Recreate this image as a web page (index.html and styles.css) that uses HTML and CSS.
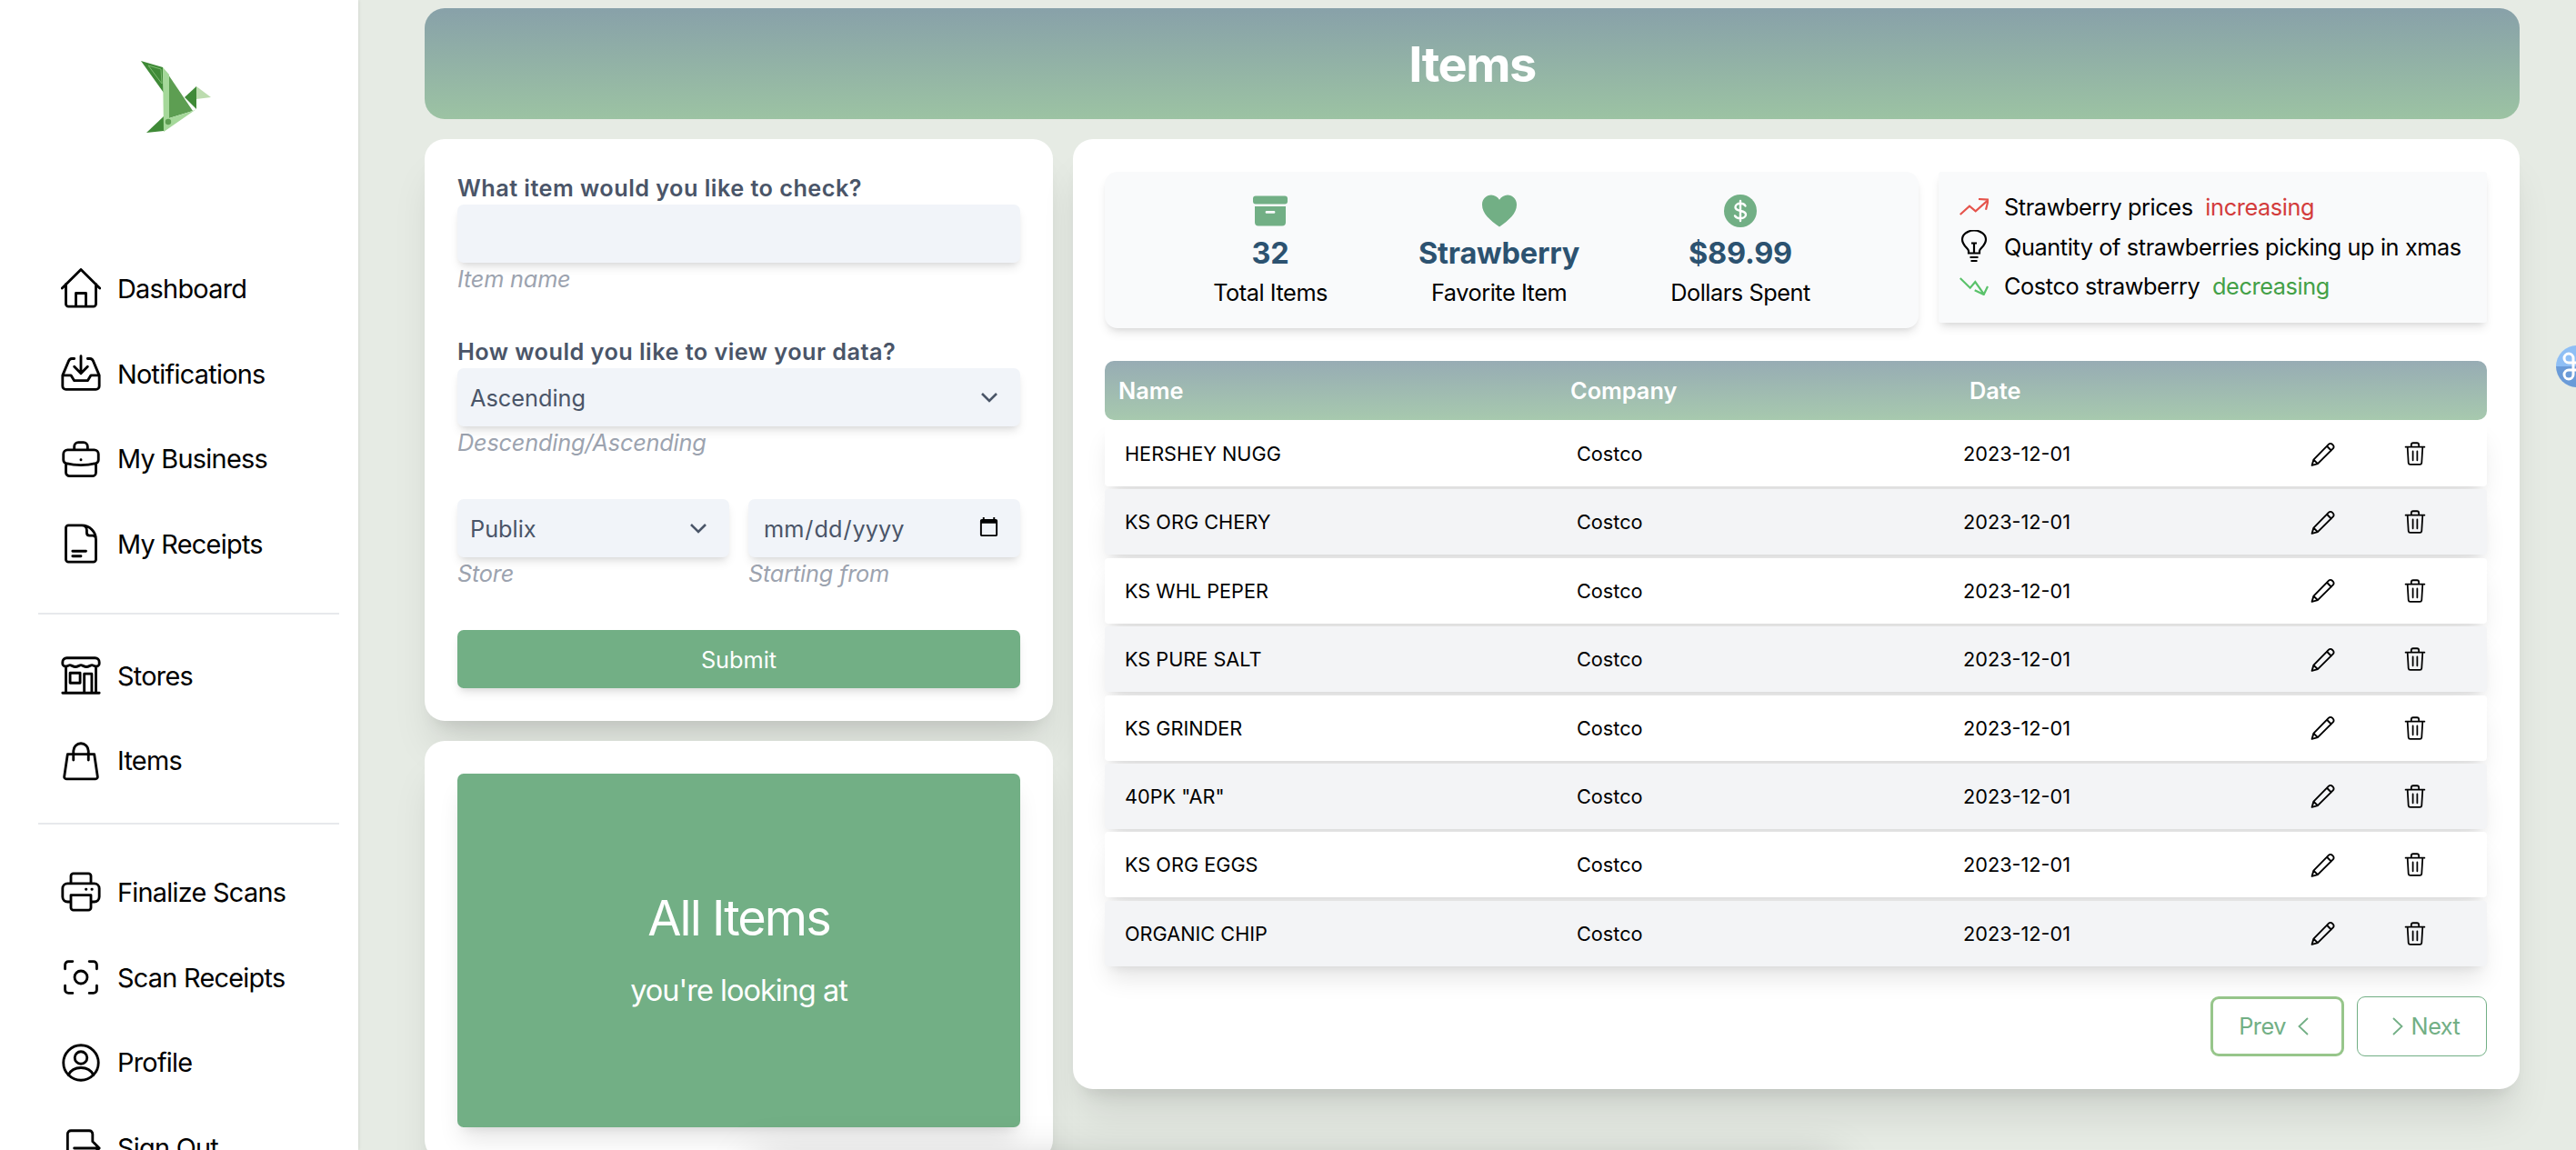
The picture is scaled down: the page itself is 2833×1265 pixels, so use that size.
FILE: index.html
```html
<!DOCTYPE html>
<html lang="en">
<head>
  <meta charset="UTF-8" />
  <meta name="viewport" content="width=device-width, initial-scale=1.0" />
  <title>Items</title>
  <link rel="stylesheet" href="styles.css">
</head>
<body>
  <svg class="sprite" aria-hidden="true">
    <symbol id="i-edit" viewBox="0 0 24 24"><path d="M1 23l1.600-5.600L17.400 2.400a2.400 2.400 0 0 1 3.400 0l.8.8a2.400 2.400 0 0 1 0 3.400L6.600 21.400 1 23zM15.600 4.200l4.200 4.200M2.600 17.400l4 4"/></symbol>
    <symbol id="i-trash" viewBox="0 0 22 25"><path d="M1 5.500h20M7 5V3.200A2 2 0 0 1 9 1.200h4a2 2 0 0 1 2 2V5M3 5.500l1 16.700a1.900 1.900 0 0 0 1.900 1.700h10.200a1.900 1.900 0 0 0 1.900-1.700l1-16.700M8.700 10v9.500M13.300 10v9.500"/></symbol>
    <symbol id="i-chevron" viewBox="0 0 20 12"><path d="M2 2l8 8 8-8"/></symbol>
  </svg>

  <aside class="sidebar">
    <div class="logo">
      <svg width="77" height="80" viewBox="0 0 77 80">
        <polygon points="0,0 24,7 25,35" fill="#3f8a37"/>
        <polygon points="8,5 22,9 23,25" fill="none" stroke="#7dbb70" stroke-width="1"/>
        <polygon points="30,15 57,55 31,63" fill="#5d9e52"/>
        <polygon points="48,40 61,28 61,53" fill="#3f8a37"/>
        <polygon points="61,28 77,40 61,42" fill="#bcdcaf"/>
        <polygon points="6,79 25,61 25,77" fill="#3f8a37"/>
        <polygon points="24,7 31,15 31,63 57,55 61,53 25,78" fill="#a5d89a"/>
        <circle cx="30" cy="67" r="3.200" fill="#5d9e52"/>
      </svg>
    </div>
    <nav class="nav">
      <a class="nav-item"><svg viewBox="0 0 24 24"><path d="M.7 12L12 .8 23.300 12M3 9.500v12A1.500 1.500 0 0 0 4.500 23h15a1.500 1.500 0 0 0 1.500-1.500v-12M9 23v-8h6v8"/></svg>Dashboard</a>
      <a class="nav-item"><svg viewBox="0 0 24 24"><path d="M8 3H6.500a2 2 0 0 0-1.800 1.300L1 13v6.500a2 2 0 0 0 2 2h18a2 2 0 0 0 2-2V13l-3.700-8.700A2 2 0 0 0 17.500 3H16M1 13h5l2 3.200h8l2-3.200h5M12 1.500v10M8 7.800l4 4 4-4"/></svg>Notifications</a>
      <a class="nav-item"><svg viewBox="0 0 24 24"><path d="M8 6.500v-2a2.500 2.500 0 0 1 2.500-2.500h3A2.500 2.500 0 0 1 16 4.500v2M1.500 9a2.500 2.500 0 0 1 2.500-2.500h16A2.500 2.500 0 0 1 22.500 9v3.500c0 1-.6 1.700-1.500 2-6 1.500-12 1.500-18 0-.9-.3-1.500-1-1.500-2zM3 14.500V20a2.200 2.200 0 0 0 2.200 2.200h13.600A2.200 2.200 0 0 0 21 20v-5.500M12 12.300v.2"/></svg>My Business</a>
      <a class="nav-item"><svg viewBox="0 0 24 24"><path d="M12.500 1H4.500A1.500 1.500 0 0 0 3 2.500v19A1.500 1.500 0 0 0 4.500 23h15a1.500 1.500 0 0 0 1.500-1.500V9.500A8.500 8.500 0 0 0 12.500 1zM12.500 1c2 0 3 1.200 3 3v1.500c0 1 .7 1.700 1.700 1.700H19c1.200 0 2 1 2 2.300M7 16.500h8M7 19.500h5"/></svg>My Receipts</a>
      <hr class="rule rule-first" />
      <a class="nav-item"><svg viewBox="0 0 24 24"><path d="M3.500 1.500h17A2.500 2.500 0 0 1 23 4v1a1.500 1.500 0 0 1-.8 1.300c-1.500.8-2.700-.5-3.600-.5s-1.800 1-3.300 1-2.400-1-3.300-1-1.800 1-3.300 1-2.400-1-3.300-1-2.100 1.300-3.600.5A1.500 1.500 0 0 1 1 5V4a2.500 2.500 0 0 1 2.500-2.500zM3 7v15.500M21 7v15.500M1 22.500h22M5.500 10.500h6v6h-6zM14 22.500V11h4.500v11.500"/></svg>Stores</a>
      <a class="nav-item"><svg viewBox="0 0 24 24"><path d="M4 8h16l2 13.500a1.200 1.200 0 0 1-1.200 1.300H3.200A1.200 1.200 0 0 1 2 21.500zM7.500 11.500V6a4.500 4.500 0 0 1 9 0v5.500"/></svg>Items</a>
      <hr class="rule rule-second" />
      <a class="nav-item"><svg viewBox="0 0 24 24"><path d="M6 7V2.500A1.500 1.500 0 0 1 7.500 1h9A1.500 1.500 0 0 1 18 2.500V7M5.500 18H4a3 3 0 0 1-3-3V10a3 3 0 0 1 3-3h16a3 3 0 0 1 3 3v5a3 3 0 0 1-3 3h-1.500M6 14h12v7.500a1.500 1.500 0 0 1-1.500 1.500h-9A1.500 1.500 0 0 1 6 21.500zM15 10.500h.2M18.500 10.500h.2"/></svg>Finalize Scans</a>
      <a class="nav-item"><svg viewBox="0 0 24 24"><path d="M2.500 7V4.500a2 2 0 0 1 2-2H7M17 2.500h2.500a2 2 0 0 1 2 2V7M21.500 17v2.500a2 2 0 0 1-2 2H17M7 21.500H4.500a2 2 0 0 1-2-2V17"/><circle cx="12" cy="12" r="3.800"/></svg>Scan Receipts</a>
      <a class="nav-item"><svg viewBox="0 0 24 24"><circle cx="12" cy="12" r="10.500"/><circle cx="12" cy="9" r="3.700"/><path d="M4.500 19.300c1.500-3 4.500-4.300 7.500-4.300s6 1.300 7.500 4.300"/></svg>Profile</a>
      <a class="nav-item"><svg viewBox="0 0 24 24"><path d="M19 8V3.500a2 2 0 0 0-2-2H6a2 2 0 0 0-2 2v17a2 2 0 0 0 2 2h11a2 2 0 0 0 2-2V16M8 12h15M19.500 8.500L23 12l-3.500 3.500"/></svg>Sign Out</a>
    </nav>
  </aside>

  <main class="main">
    <header class="banner"><h1>Items</h1></header>

    <div class="columns">
      <section class="left-col">
        <form class="card search-form">
          <div class="field">
            <label for="item">What item would you like to check?</label>
            <input id="item" class="control" type="text" />
            <p class="hint">Item name</p>
          </div>
          <div class="field">
            <label for="order">How would you like to view your data?</label>
            <div class="select-wrap">
              <select id="order" class="control"><option>Ascending</option><option>Descending</option></select>
              <svg class="chevron"><use href="#i-chevron"/></svg>
            </div>
            <p class="hint">Descending/Ascending</p>
          </div>
          <div class="field-row">
            <div class="field">
              <div class="select-wrap">
                <select class="control"><option>Publix</option><option>Costco</option></select>
                <svg class="chevron"><use href="#i-chevron"/></svg>
              </div>
              <p class="hint">Store</p>
            </div>
            <div class="field">
              <input class="control date" type="date" />
              <p class="hint">Starting from</p>
            </div>
          </div>
          <button class="submit" type="button">Submit</button>
        </form>

        <div class="card">
          <div class="all-items">
            <h2>All Items</h2>
            <p>you're looking at</p>
          </div>
        </div>
      </section>

      <section class="card results">
        <div class="summary">
          <div class="stats">
            <div class="stat">
              <svg class="stat-icon" viewBox="0 0 38 33"><path d="M3 0h32a3 3 0 0 1 3 3v3a3 3 0 0 1-3 3H3a3 3 0 0 1-3-3V3a3 3 0 0 1 3-3zM2 11.500h34V29a4 4 0 0 1-4 4H6a4 4 0 0 1-4-4zM15 16.500a1.200 1.200 0 0 0 0 2.800h8a1.200 1.200 0 0 0 0-2.800z" fill-rule="evenodd"/></svg>
              <strong>32</strong>
              <span>Total Items</span>
            </div>
            <div class="stat">
              <svg class="stat-icon" viewBox="0 0 36 33"><path d="M18 33C8 26 0 19 0 10 0 4 4.500 0 9.500 0 13 0 16 2 18 5c2-3 5-5 8.500-5C31.500 0 36 4 36 10c0 9-8 16-18 23z"/></svg>
              <strong>Strawberry</strong>
              <span>Favorite Item</span>
            </div>
            <div class="stat">
              <svg class="stat-icon" viewBox="0 0 36 36"><circle cx="18" cy="18" r="18"/><path class="dollar" d="M18 7v22M23.500 12.500c-1-1.700-3-2.700-5.500-2.700-3 0-5.500 1.600-5.500 4.200 0 5.500 11.500 2.500 11.500 8 0 2.600-2.700 4.200-6 4.200-2.700 0-5-1-6-2.800"/></svg>
              <strong>$89.99</strong>
              <span>Dollars Spent</span>
            </div>
          </div>
          <ul class="trends">
            <li><svg class="trend-icon up" viewBox="0 0 32 20"><path d="M.7 18L11 8.700l6.700 5.600L31.700 1.700M21 1l10.700.7L29 12.700"/></svg>Strawberry prices <em class="rising">increasing</em></li>
            <li><svg class="trend-icon bulb" viewBox="0 0 32 36"><path d="M10 25.500v-2.500c0-2.500-7-6-7-12.500a13 10 0 0 1 26 0c0 6.500-7 10-7 12.500v2.500zM11.500 30h9M12.500 34h7M13 14.500h6M16 14.500v11"/></svg>Quantity of strawberries picking up in xmas</li>
            <li><svg class="trend-icon down" viewBox="0 0 32 20"><path d="M.7 1l11 10.700L17.300 5l9.400 13.300M16.700 14.300l10 4.700L31 10"/></svg>Costco strawberry <em class="falling">decreasing</em></li>
          </ul>
        </div>

        <div class="table-head">
          <span>Name</span>
          <span>Company</span>
          <span>Date</span>
        </div>
        <div class="rows">
          <div class="row"><span>HERSHEY NUGG</span><span>Costco</span><span>2023-12-01</span><span class="actions"><svg class="edit"><use href="#i-edit"/></svg><svg class="trash"><use href="#i-trash"/></svg></span></div>
          <div class="row"><span>KS ORG CHERY</span><span>Costco</span><span>2023-12-01</span><span class="actions"><svg class="edit"><use href="#i-edit"/></svg><svg class="trash"><use href="#i-trash"/></svg></span></div>
          <div class="row"><span>KS WHL PEPER</span><span>Costco</span><span>2023-12-01</span><span class="actions"><svg class="edit"><use href="#i-edit"/></svg><svg class="trash"><use href="#i-trash"/></svg></span></div>
          <div class="row"><span>KS PURE SALT</span><span>Costco</span><span>2023-12-01</span><span class="actions"><svg class="edit"><use href="#i-edit"/></svg><svg class="trash"><use href="#i-trash"/></svg></span></div>
          <div class="row"><span>KS GRINDER</span><span>Costco</span><span>2023-12-01</span><span class="actions"><svg class="edit"><use href="#i-edit"/></svg><svg class="trash"><use href="#i-trash"/></svg></span></div>
          <div class="row"><span>40PK "AR"</span><span>Costco</span><span>2023-12-01</span><span class="actions"><svg class="edit"><use href="#i-edit"/></svg><svg class="trash"><use href="#i-trash"/></svg></span></div>
          <div class="row"><span>KS ORG EGGS</span><span>Costco</span><span>2023-12-01</span><span class="actions"><svg class="edit"><use href="#i-edit"/></svg><svg class="trash"><use href="#i-trash"/></svg></span></div>
          <div class="row"><span>ORGANIC CHIP</span><span>Costco</span><span>2023-12-01</span><span class="actions"><svg class="edit"><use href="#i-edit"/></svg><svg class="trash"><use href="#i-trash"/></svg></span></div>
        </div>

        <div class="pager">
          <button class="page-btn prev" type="button">Prev <svg viewBox="0 0 12 20"><path d="M11 1L1.500 10 11 19"/></svg></button>
          <button class="page-btn next" type="button"><svg viewBox="0 0 12 20"><path d="M1 1l9.500 9L1 19"/></svg> Next</button>
        </div>
      </section>
    </div>
  </main>

  <!-- panel that sits below the fold, only its shadow shows -->
  <div class="below-fold"></div>

  <div class="cmd-badge">
    <svg viewBox="0 0 46 46"><path d="M19 32V14a5 5 0 1 0-5 5h18a5 5 0 1 0-5-5v18a5 5 0 1 0 5-5H14a5 5 0 1 0 5 5"/></svg>
  </div>
</body>
</html>
```
FILE: styles.css
```css
* {
  box-sizing: border-box;
}
html, body {
  height: 1265px;
}
body {
  display: flex;
  margin: 0;
  overflow: hidden;
  position: relative;
  font-family: Inter, "Noto Sans", sans-serif;
  font-size: 25.3px;
  background-color: #e6ebe4;
  color: #000;
}
.sprite {
  display: none;
}

/* sidebar */
.sidebar {
  flex: 0 0 394px;
  background: #fff;
  box-shadow: 1px 0 3px rgba(0,0,0,0.08);
  padding: 67px 21px 0 42px;
  position: relative;
  z-index: 1;
}
.logo {
  height: 204px;
  padding-left: 113px;
}
.logo svg {
  display: block;
}
.nav-item {
  display: flex;
  align-items: center;
  gap: 18px;
  height: 93.7px;
  padding: 0 0 1px 25px;
  font-size: 28.9px;
  letter-spacing: -0.75px;
}
.nav-item svg {
  width: 44px;
  height: 44px;
  fill: none;
  stroke: #000;
  stroke-width: 1.55;
  stroke-linecap: round;
  stroke-linejoin: round;
}
.rule {
  border: none;
  border-top: 2px solid #e7e9ec;
}
.rule-first {
  margin: 28px 0 21px;
}
.rule-second {
  margin: 21px 0 28px;
}

/* main area */
.main {
  flex: 1;
  min-width: 0;
  padding: 9px 62px 0 73px;
}
.banner {
  height: 122px;
  display: flex;
  align-items: center;
  justify-content: center;
  border-radius: 22px;
  background: linear-gradient(#88a1a9, #9cc3a3);
}
.banner h1 {
  margin: 0;
  color: #fff;
  font-size: 54px;
  font-weight: 700;
  letter-spacing: -1.5px;
}
.columns {
  display: grid;
  grid-template-columns: 691px 1591px;
  gap: 22px;
  margin-top: 22px;
}
.left-col {
  display: flex;
  flex-direction: column;
  gap: 22px;
}
.card {
  background: #fff;
  border-radius: 22px;
  padding: 36px;
  box-shadow: 0 36px 45px -9px rgba(0,0,0,0.1), 0 14px 18px -11px rgba(0,0,0,0.1);
}

/* form */
.search-form {
  display: flex;
  flex-direction: column;
  gap: 44px;
}
.field {
  display: flex;
  flex-direction: column;
  flex: 1;
  min-width: 0;
}
.field label {
  font-weight: 600;
  line-height: 36px;
  letter-spacing: 0.45px;
  color: #4a5568;
}
.control {
  width: 100%;
  height: 64px;
  padding: 0 14px;
  border: none;
  border-radius: 7px;
  background: #f1f4f9;
  box-shadow: 0 7px 11px -2px rgba(0,0,0,0.1), 0 4px 7px -4px rgba(0,0,0,0.1);
  color: #4a5568;
  font: inherit;
  appearance: none;
  outline: none;
}
.date {
  padding: 0 20px 0 16px;
}
.hint {
  margin: 0;
  line-height: 36px;
  font-style: italic;
  letter-spacing: -0.2px;
  color: #9ca3af;
}
.select-wrap {
  position: relative;
}
.chevron {
  position: absolute;
  right: 24px;
  top: 26px;
  width: 20px;
  height: 12px;
  fill: none;
  stroke: #4a5568;
  stroke-width: 2.6;
  pointer-events: none;
}
.field-row {
  display: flex;
  gap: 21px;
}
.submit {
  height: 64px;
  border: none;
  border-radius: 7px;
  background: #72af85;
  color: #fff;
  font: inherit;
  box-shadow: 0 7px 11px -2px rgba(0,0,0,0.1), 0 4px 7px -4px rgba(0,0,0,0.1);
}

/* green box */
.all-items {
  height: 389px;
  display: flex;
  flex-direction: column;
  align-items: center;
  justify-content: center;
  border-radius: 7px;
  background: #72af85;
  color: #fff;
  box-shadow: 0 18px 27px -5px rgba(0,0,0,0.1), 0 7px 11px -7px rgba(0,0,0,0.1);
}
.all-items h2 {
  margin: 0 0 28px;
  font-size: 54px;
  line-height: 60px;
  font-weight: 400;
  letter-spacing: -2px;
}
.all-items p {
  margin: 0;
  font-size: 32.5px;
  line-height: 44px;
  letter-spacing: -1px;
}

/* right card */
.results {
  align-self: start;
  padding: 36px 36px 36px 35px;
}
.summary {
  display: flex;
  align-items: flex-start;
  gap: 22px;
  margin-bottom: 36px;
}
.stats {
  flex: 0 0 895px;
  display: flex;
  justify-content: center;
  gap: 100px;
  padding: 25px 0 19px;
  border-radius: 14px;
  background: #f9fafb;
  box-shadow: 0 7px 11px -2px rgba(0,0,0,0.1), 0 4px 7px -4px rgba(0,0,0,0.1);
}
.stat {
  display: flex;
  flex-direction: column;
  align-items: center;
  line-height: 40px;
}
.stat-icon {
  width: 38px;
  height: 36px;
  margin-bottom: 9px;
  fill: #72af85;
}
.stat-icon .dollar {
  fill: none;
  stroke: #fff;
  stroke-width: 2.4;
  stroke-linecap: round;
}
.stat strong {
  font-size: 32.5px;
  font-weight: 700;
  letter-spacing: -0.2px;
  color: #2c5270;
}
.stat span {
  margin-top: 3px;
  letter-spacing: -0.45px;
}
.trends {
  flex: 1;
  list-style: none;
  margin: 0;
  padding: 17px 10px 18px 23px;
  background: #f9fafb;
  border-radius: 3px;
  box-shadow: 0 7px 11px -2px rgba(0,0,0,0.1), 0 4px 7px -4px rgba(0,0,0,0.1);
}
.trends li {
  display: flex;
  align-items: center;
  height: 43.5px;
  white-space: pre;
  letter-spacing: -0.4px;
}
.trend-icon {
  flex: 0 0 32px;
  height: 20px;
  margin-right: 17px;
  fill: none;
  stroke-width: 2.2;
}
.up {
  stroke: #e5534b;
}
.down {
  stroke: #5ac26a;
}
.bulb {
  height: 36px;
  stroke: #000;
}
.trends em {
  font-style: normal;
  margin-left: 7px;
}
.rising {
  color: #d33c3c;
}
.falling {
  color: #43a047;
}

/* table */
.table-head {
  display: grid;
  grid-template-columns: 497px 439px 1fr;
  align-items: center;
  height: 65px;
  padding-left: 15px;
  border-radius: 10px;
  background: linear-gradient(#97acb4, #a7c9ae);
  color: #fff;
  font-weight: 600;
}
.rows {
  display: flex;
  flex-direction: column;
  gap: 3.4px;
  margin-top: 1px;
}
.row {
  display: grid;
  grid-template-columns: 497px 425px 382px 1fr;
  align-items: center;
  height: 72px;
  padding-left: 22px;
  border-radius: 4px;
  background: #fff;
  font-size: 21.7px;
  box-shadow: 0 18px 27px -5px rgba(0,0,0,0.1), 0 7px 11px -7px rgba(0,0,0,0.1);
  position: relative;
}
.row:nth-child(even) {
  background: #f3f4f6;
}
.actions {
  display: flex;
  align-items: center;
  gap: 73px;
}
.actions svg {
  fill: none;
  stroke: #000;
  stroke-linecap: round;
  stroke-linejoin: round;
}
.edit {
  width: 28px;
  height: 27px;
  stroke-width: 1.7;
}
.trash {
  width: 28px;
  height: 26px;
  stroke-width: 1.7;
}

/* pager */
.pager {
  display: flex;
  justify-content: flex-end;
  gap: 14px;
  margin-top: 33px;
}
.page-btn {
  display: flex;
  align-items: center;
  justify-content: center;
  height: 66px;
  background: #fff;
  color: #72af85;
  font: inherit;
  letter-spacing: -0.5px;
  border-radius: 9px;
}
.page-btn svg {
  width: 12px;
  height: 20px;
  fill: none;
  stroke: #72af85;
  stroke-width: 1.8;
}
.prev {
  width: 147px;
  gap: 13px;
  padding: 0 8px 0 0;
  border: 3.5px solid #97c68b;
}
.next {
  width: 143px;
  gap: 9px;
  padding: 0 0 0 9px;
  border: 1.8px solid #72af85;
}

/* things lying over the page */
.below-fold {
  position: absolute;
  left: 830px;
  top: 1280px;
  width: 1190px;
  height: 120px;
  z-index: 2;
  box-shadow: 0 0 50px rgba(0,0,0,0.25);
}
.cmd-badge {
  position: absolute;
  left: 2811px;
  top: 380px;
  width: 46px;
  height: 46px;
  border-radius: 50%;
  overflow: hidden;
  z-index: 3;
  background: linear-gradient(#8fbff5 50%, #6a9bd8 50%);
}
.cmd-badge svg {
  display: block;
  fill: none;
  stroke: #fff;
  stroke-width: 3;
}
```
